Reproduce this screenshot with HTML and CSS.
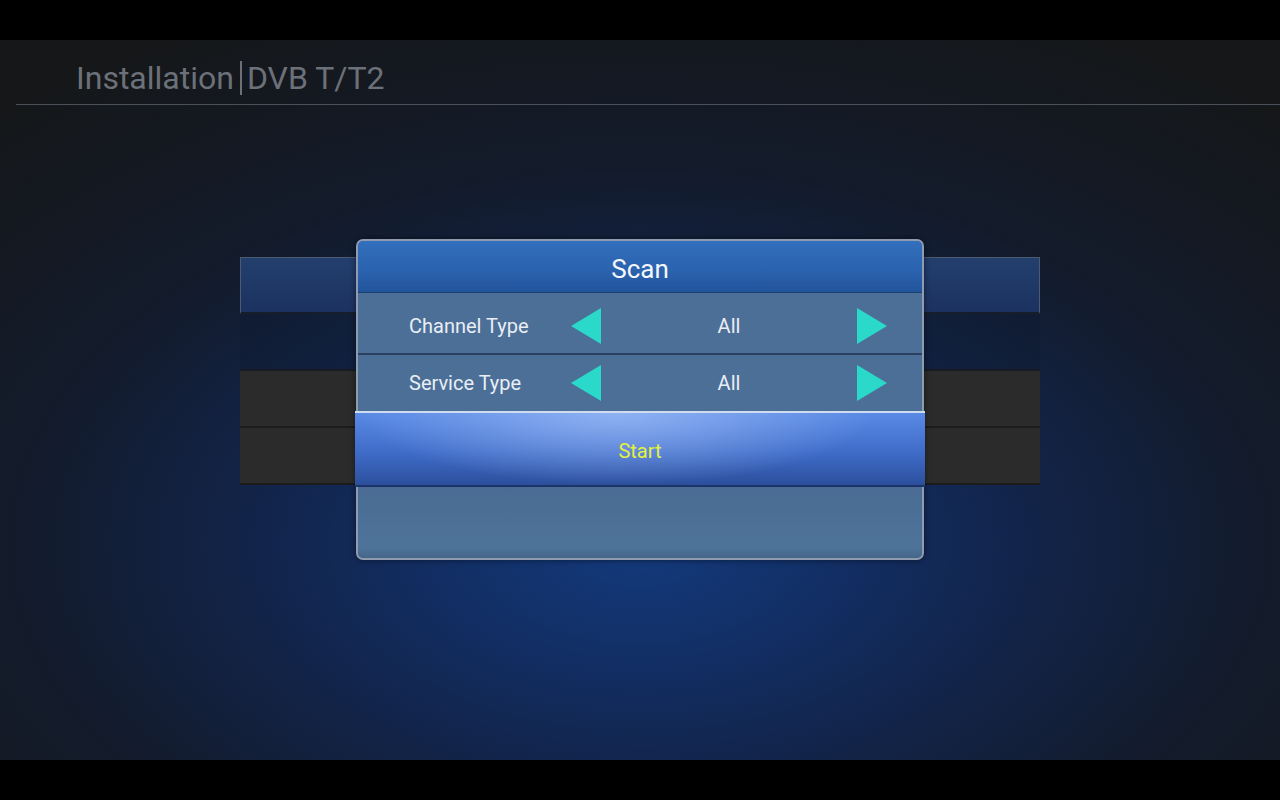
FILE: index.html
```html
<!DOCTYPE html>
<html lang="en">
<head>
    <meta charset="UTF-8">
    <meta name="viewport" content="width=device-width, initial-scale=1.0">
    <title>Installation - DVB T/T2</title>
    <link rel="stylesheet" href="styles.css">
</head>
<body>
    <div class="screen">
        <div class="header">
            <span class="title">Installation</span><span class="title-sep"></span><span class="title">DVB T/T2</span>
        </div>

        <!-- menu list behind the popup -->
        <div class="menu-list">
            <div class="menu-item focused"></div>
            <div class="menu-item clear"></div>
            <div class="menu-item"></div>
            <div class="menu-item"></div>
        </div>

        <div class="dialog">
            <div class="dialog-title">Scan</div>
            <div class="option-row">
                <span class="option-label">Channel Type</span>
                <svg class="arrow" viewBox="0 0 30 36"><polygon points="0,18 30,0 30,36"/></svg>
                <span class="option-value">All</span>
                <svg class="arrow" viewBox="0 0 30 36"><polygon points="30,18 0,0 0,36"/></svg>
            </div>
            <div class="option-row last">
                <span class="option-label">Service Type</span>
                <svg class="arrow" viewBox="0 0 30 36"><polygon points="0,18 30,0 30,36"/></svg>
                <span class="option-value">All</span>
                <svg class="arrow" viewBox="0 0 30 36"><polygon points="30,18 0,0 0,36"/></svg>
            </div>
            <div class="start-btn">Start</div>
            <div class="dialog-fill"></div>
        </div>
    </div>
</body>
</html>
```

FILE: styles.css
```css
html, body{
     margin: 0;
     height: 100%;
     background-color: #000;
}
body{
     padding: 40px 0;
     box-sizing: border-box;
     font-family: Roboto, "Noto Sans", sans-serif;
}
.screen{
     position: relative;
     height: 720px;
     overflow: hidden;
     background: radial-gradient(ellipse 75% 80% at 50% 70%, #143a7c 0%, #123068 18%, #12244a 40%, #131b2b 65%, #151719 100%);
}
.header{
     height: 52px;
     padding: 12px 0 0 60px;
     margin-left: 16px;
     border-bottom: 1px solid #4b5159;
     display: flex;
     align-items: center;
}
.title{
     font-size: 32px;
     color: #6c7179;
     line-height: 1;
}
.title-sep{
     width: 2px;
     height: 34px;
     margin: 0 5px 0 6px;
     background-color: #6c7179;
}
.menu-list{
     width: 800px;
     margin: 152px auto 0;
}
.menu-item{
     height: 55px;
     background-color: #2b2b2b;
     border-bottom: 2px solid #1c1c1c;
}
.menu-item.focused{
     background: linear-gradient(#233f6e, #1c3260);
     border: 1px solid #4d5b70;
     border-bottom: 2px solid #161e2c;
     height: 54px;
}
.menu-item.clear{
     background-color: rgba(14, 26, 46, 0.3);
     border-bottom-color: #161b24;
}
.dialog{
     position: absolute;
     left: 356px;
     top: 199px;
     width: 564px;
     border: 2px solid #8f9cb0;
     border-radius: 7px;
     background-color: #4c6f97;
     display: flex;
     flex-direction: column;
     box-shadow: 0 0 6px rgba(0, 0, 0, 0.5);
}
.dialog-title{
     height: 52px;
     border-radius: 5px 5px 0 0;
     background: linear-gradient(#326fbc, #2a62ae 60%, #22549a);
     color: #f4f7fb;
     font-size: 26px;
     display: flex;
     align-items: center;
     justify-content: center;
     padding-top: 5px;
     box-sizing: border-box;
     border-bottom: 1px solid #1d3f70;
}
.option-row{
     height: 62px;
     display: grid;
     grid-template-columns: 162px 30px 1fr 31px;
     align-items: center;
     padding: 6px 34px 0 51px;
     box-sizing: border-box;
     border-bottom: 2px solid #2b4060;
     color: #e9eef5;
     font-size: 20px;
}
.option-row.last{
     height: 56px;
     padding-top: 0;
     border-bottom: none;
}
.option-value{
     text-align: center;
}
.arrow{
     width: 30px;
     height: 36px;
     fill: #2ad9c9;
}
.start-btn{
     height: 76px;
     box-sizing: border-box;
     margin: 0 -3px;
     border-top: 2px solid #cfdcf0;
     border-bottom: 2px solid #1d3468;
     background:
          radial-gradient(ellipse 45% 100% at 46% 0%, rgba(165, 195, 248, 0.7), rgba(165, 195, 248, 0) 100%),
          linear-gradient(#5a8ae6, #3f6cc8 55%, #2c4f9c);
     color: #e4f040;
     font-size: 20px;
     display: flex;
     align-items: center;
     justify-content: center;
     padding-top: 4px;
}
.dialog-fill{
     height: 71px;
     border-radius: 0 0 5px 5px;
     background: linear-gradient(#4a6c94, #4e7399 85%, #456689);
}
```
